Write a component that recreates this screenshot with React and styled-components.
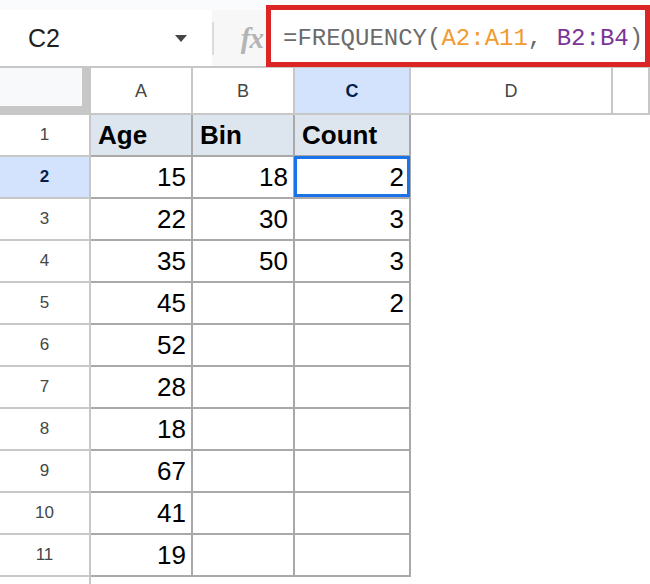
import React from 'react';
import styled, { createGlobalStyle } from 'styled-components';

const GlobalStyle = createGlobalStyle`
  html, body {
    margin: 0;
    padding: 0;
    background: #ffffff;
    font-family: "Liberation Sans", Arial, sans-serif;
  }
  body {
    width: 650px;
    height: 584px;
    overflow: hidden;
  }
`;

const TopBar = styled.div`
  display: flex;
  box-sizing: border-box;
  height: 68px;
  background: #f9fbfd;
  border-bottom: 2px solid #c7c7c7;
`;

const NameBox = styled.div`
  display: flex;
  align-items: center;
  justify-content: space-between;
  box-sizing: border-box;
  width: 212px;
  height: 56px;
  margin-top: 10px;
  padding: 0 25px 0 28px;
  background: #ffffff;
  font-size: 25px;
  color: #1f1f1f;
`;

const Caret = styled.span`
  width: 0;
  height: 0;
  border-left: 6px solid transparent;
  border-right: 6px solid transparent;
  border-top: 7px solid #444746;
`;

const Divider = styled.div`
  width: 2px;
  height: 56px;
  margin-top: 10px;
  background: linear-gradient(#f7f7f7 0 12px, #dadce0 12px 45px, #f7f7f7 45px);
`;

const FxArea = styled.div`
  display: flex;
  align-items: center;
  justify-content: flex-end;
  box-sizing: border-box;
  width: 52px;
  height: 56px;
  margin-top: 10px;
  padding-right: 3px;
  background: #f7f7f7;
  font-family: "Liberation Serif", "Times New Roman", serif;
  font-style: italic;
  font-weight: bold;
  font-size: 29px;
  color: #b4b4b4;
  letter-spacing: -1px;
`;

const FormulaBox = styled.div`
  display: flex;
  align-items: center;
  box-sizing: border-box;
  flex: 1;
  height: 62px;
  margin-top: 5px;
  padding: 5px 0 0 12px;
  background: #ffffff;
  border: 5px solid #dc2626;
  font-family: "Liberation Mono", "Courier New", monospace;
  font-size: 24px;
  color: #6b6b6b;
  white-space: pre;
`;

const Ref = styled.span`
  color: ${p => p.$color};
`;

const Sheet = styled.div`
  display: grid;
  grid-template-columns: 91px 102px 102px 116px 202px 1fr;
  grid-template-rows: 47px repeat(11, 42px) 1fr;
  height: 516px;
`;

const Corner = styled.div`
  box-sizing: border-box;
  background: #f8f9fa;
  border-right: 9px solid #c7c7c7;
  border-bottom: 9px solid #c7c7c7;
`;

const ColHeader = styled.div`
  display: flex;
  align-items: center;
  justify-content: center;
  box-sizing: border-box;
  padding-top: 2px;
  background: ${p => (p.$active ? '#d3e3fd' : '#ffffff')};
  border-right: 2px solid #c7c7c7;
  border-bottom: 2px solid #c7c7c7;
  font-size: 18px;
  font-weight: ${p => (p.$active ? 'bold' : 'normal')};
  color: ${p => (p.$active ? '#041e49' : '#444746')};
`;

const RowHeader = styled.div`
  display: flex;
  align-items: center;
  justify-content: center;
  box-sizing: border-box;
  background: ${p => (p.$active ? '#d3e3fd' : '#ffffff')};
  border-right: 2px solid #c7c7c7;
  border-bottom: ${p => (p.$open ? 'none' : '2px solid #c7c7c7')};
  font-size: 17px;
  font-weight: ${p => (p.$active ? 'bold' : 'normal')};
  color: ${p => (p.$active ? '#041e49' : '#444746')};
`;

const Cell = styled.div`
  position: relative;
  display: flex;
  align-items: center;
  justify-content: ${p => (p.$head ? 'flex-start' : 'flex-end')};
  box-sizing: border-box;
  padding: 0 5px 0 7px;
  background: ${p => (p.$head ? '#dde5ef' : '#ffffff')};
  border-right: 2px solid #a9a9a9;
  border-bottom: 2px solid #a9a9a9;
  font-size: 26px;
  font-weight: ${p => (p.$head ? 'bold' : 'normal')};
  color: #000000;

  ${p =>
    p.$selected &&
    `
    &::after {
      content: '';
      position: absolute;
      top: -1px;
      left: -1px;
      right: -1px;
      bottom: 0;
      border: 3px solid #1a73e8;
    }
  `}
`;

const Blank = styled.div`
  background: #ffffff;
`;

const columns = ['A', 'B', 'C', 'D', ''];

const rows = [
  ['Age', 'Bin', 'Count'],
  [15, 18, 2],
  [22, 30, 3],
  [35, 50, 3],
  [45, '', 2],
  [52, '', ''],
  [28, '', ''],
  [18, '', ''],
  [67, '', ''],
  [41, '', ''],
  [19, '', ''],
];

export default function App() {
  return (
    <>
      <GlobalStyle />
      <TopBar>
        <NameBox>
          <span>C2</span>
          <Caret />
        </NameBox>
        <Divider />
        <FxArea>fx</FxArea>
        <FormulaBox>
          =FREQUENCY(<Ref $color="#f29b30">A2:A11</Ref>, <Ref $color="#7b3596">B2:B4</Ref>)
        </FormulaBox>
      </TopBar>
      <Sheet>
        <Corner />
        {columns.map((c, i) => (
          <ColHeader key={i} $active={c === 'C'}>{c}</ColHeader>
        ))}
        {rows.map((row, r) => (
          <React.Fragment key={r}>
            <RowHeader $active={r === 1}>{r + 1}</RowHeader>
            {row.map((v, c) => (
              <Cell key={c} $head={r === 0} $selected={r === 1 && c === 2}>
                {v}
              </Cell>
            ))}
            <Blank />
            <Blank />
          </React.Fragment>
        ))}
        <RowHeader $open />
        <Blank />
        <Blank />
        <Blank />
        <Blank />
        <Blank />
      </Sheet>
    </>
  );
}
